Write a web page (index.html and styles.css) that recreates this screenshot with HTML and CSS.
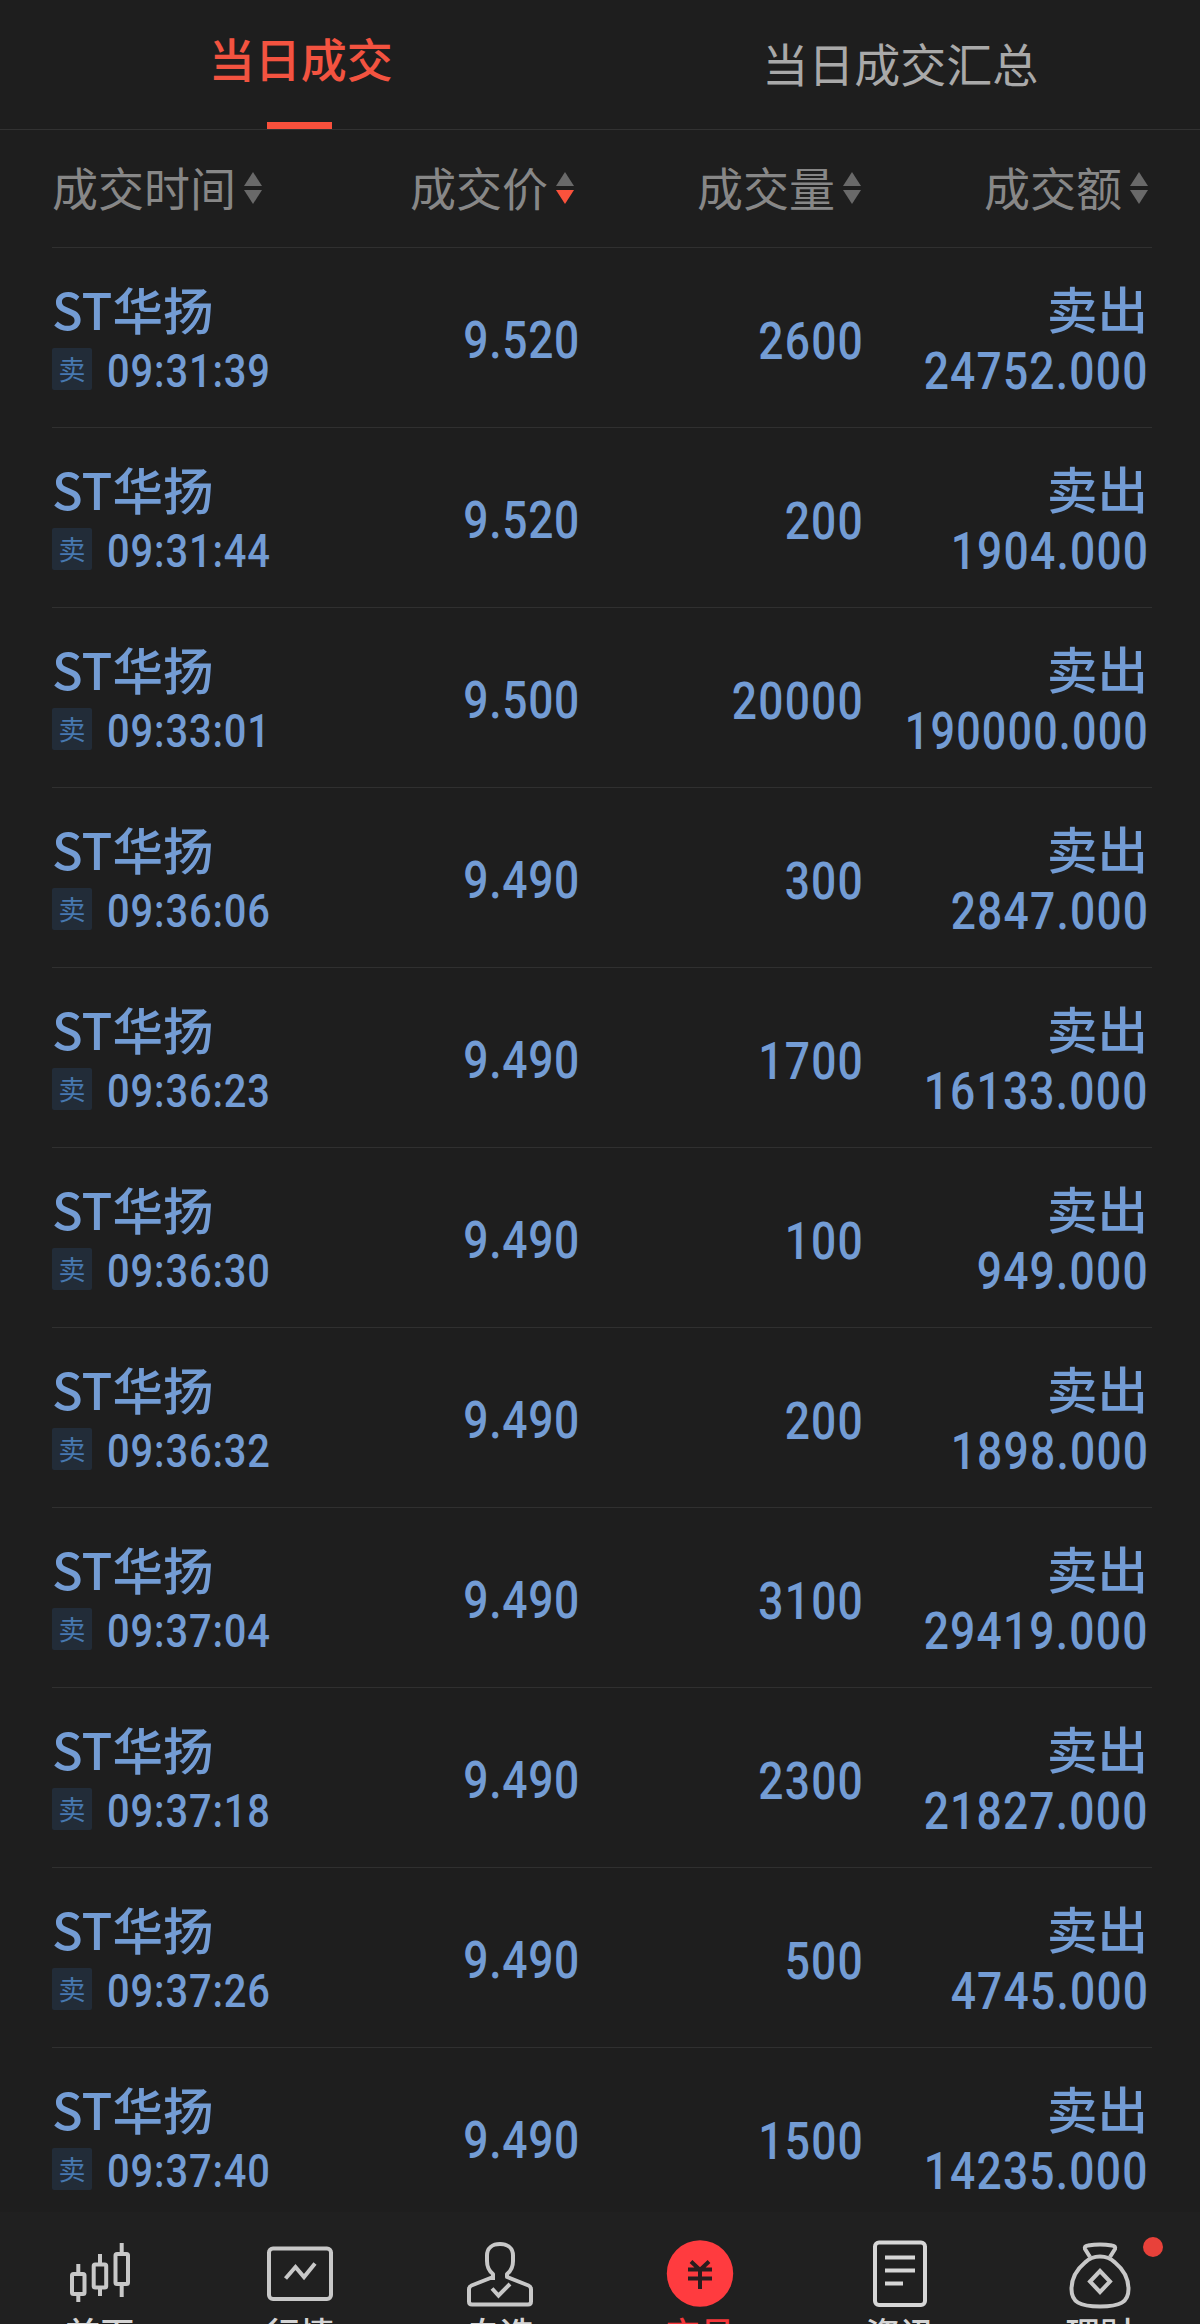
FILE: index.html
```html
<!DOCTYPE html>
<html lang="zh-CN">
<head>
<meta charset="utf-8">
<title>当日成交</title>
<link rel="stylesheet" href="styles.css">
</head>
<body>
<div class="app">
  <div class="tabs">
    <div class="tab tab-active"><span>当日成交</span></div>
    <div class="tab"><span>当日成交汇总</span></div>
  </div>
  <div class="head">
    <div class="th">成交时间<svg class="sort" viewBox="0 0 20 36"><path d="M10 2 19 16H1Z"/><path d="M10 34 19 20H1Z"/></svg></div>
    <div class="th th-price">成交价<svg class="sort sort-desc" viewBox="0 0 20 36"><path d="M10 2 19 16H1Z"/><path d="M10 34 19 20H1Z"/></svg></div>
    <div class="th th-qty">成交量<svg class="sort" viewBox="0 0 20 36"><path d="M10 2 19 16H1Z"/><path d="M10 34 19 20H1Z"/></svg></div>
    <div class="th th-sum">成交额<svg class="sort" viewBox="0 0 20 36"><path d="M10 2 19 16H1Z"/><path d="M10 34 19 20H1Z"/></svg></div>
  </div>
  <div class="list" id="list"></div>
  <div class="nav">
    <div class="item"><svg viewBox="0 0 80 80"><g fill="none" stroke="#c8c8c8" stroke-width="4"><rect x="12" y="44" width="12.500" height="20" rx="1.500"/><rect x="33.700" y="34.500" width="12.500" height="23" rx="1.500"/><rect x="55.500" y="24" width="12.500" height="30" rx="1.500"/><path d="M18.300 34v10M18.300 64v8M40 24v10.500M40 57.500V66M61.700 13v11M61.700 54v13"/></g></svg><span>首页</span></div>
    <div class="item"><svg viewBox="0 0 80 80"><g fill="none" stroke="#c8c8c8" stroke-width="4"><rect x="9" y="18.500" width="62" height="50.500" rx="4"/><path d="M25.500 48.500 35.500 37 44 47 55 33.500"/></g></svg><span>行情</span></div>
    <div class="item"><svg viewBox="0 0 80 80"><g fill="none" stroke="#c8c8c8" stroke-width="4" stroke-linejoin="round"><path d="M33 50v-6C29 41 27 37 27 31v-5.500C27 18 32.500 14 40 14s13 4 13 11.500V31c0 6-2 10-6 13v3l21.500 8.500q2.500 1 2.500 4V71.500q0 3-3 3H12q-3 0-3-3V59.500q0-3 2.500-4L33 47"/><path d="m32 58.500 6.500 7L50 54" stroke-linejoin="miter"/></g></svg><span>自选</span></div>
    <div class="item item-active"><svg viewBox="0 0 80 80"><circle cx="40" cy="43.500" r="33.200" fill="#ff3b3f"/><path d="m31 31.500 9 8.500 9-8.500M28 39.500h24M28 48.500h24M40 39v20" fill="none" stroke="#2a1d1e" stroke-width="4"/></svg><span>交易</span></div>
    <div class="item"><svg viewBox="0 0 80 80"><g fill="none" stroke="#d6d6d6" stroke-width="4"><rect x="15" y="12.500" width="50" height="62.500" rx="4"/><path d="M25 27.500h30M25 40.500h30M25 53.500h18"/></g></svg><span>资讯</span></div>
    <div class="item"><svg viewBox="0 0 80 80"><g fill="none" stroke="#c8c8c8" stroke-width="4" stroke-linejoin="round"><path d="M30 27 25 19q-1-3 3-3.500 12-2.200 24 0 4 .5 3 3.500l-5 8"/><path d="M40 26.500c-6 0-11 2-15 6C16 40 11.500 48 11.500 59c0 13 8 17.500 28.500 17.500S68.500 72 68.500 59C68.500 48 64 40 55 32.500c-4-4-9-6-15-6Z"/><path d="M40 41 50 51.500 40 62 30 51.500Z" stroke-linejoin="miter"/></g></svg><span>理财</span><i class="dot"></i></div>
  </div>
</div>
<script src="app.js"></script>
</body>
</html>
```
FILE: styles.css
```css
* { box-sizing: border-box; }
body {
  margin: 0;
  background: #1e1e1e;
  font-family: "Noto Sans CJK SC", sans-serif;
}
.app {
  display: flex;
  flex-direction: column;
  height: 2324px;
  overflow: hidden;
}
.tabs {
  display: flex;
  flex: none;
  height: 130px;
  border-bottom: 1px solid #323232;
}
.tab {
  flex: 1;
  display: flex;
  align-items: center;
  justify-content: center;
  padding-bottom: 6px;
  font-size: 46px;
  line-height: 46px;
  color: #a9a9a9;
}
.tab-active {
  position: relative;
  padding: 0 0 15px 1px;
  font-weight: 500;
  color: #f35340;
}
.tab-active::after {
  content: "";
  position: absolute;
  left: 267px;
  bottom: 0;
  width: 65px;
  height: 7px;
  background: #f9503c;
}
.head, .row {
  display: grid;
  grid-template-columns: 242px 285px 284px 286px;
  margin: 0 48px 0 52px;
  border-bottom: 1px solid #303030;
}
.head {
  flex: none;
  height: 118px;
  padding-top: 33px;
}
.th {
  display: flex;
  align-items: center;
  justify-content: flex-end;
  gap: 7px;
  height: 46px;
  font-size: 46px;
  line-height: 46px;
  white-space: nowrap;
  color: #878787;
}
.th:first-child { justify-content: flex-start; }
.th-price { padding-right: 4px; }
.th-qty { padding-right: 1px; }
.sort {
  flex: none;
  width: 20px;
  height: 36px;
  margin-top: 4px;
  fill: #696969;
}
.sort-desc path:last-child { fill: #fa523c; }
.list {
  flex: 1;
  min-height: 0;
  overflow: hidden;
}
.row {
  height: 180px;
  padding-top: 35px;
  color: #739cd4;
}
.name, .side {
  height: 50px;
  font-size: 50.5px;
  line-height: 50px;
  font-weight: 500;
}
.stamp {
  display: flex;
  gap: 15px;
  height: 42px;
  margin-top: 15px;
}
.badge {
  width: 42px;
  height: 42px;
  border-radius: 2px;
  background: #222c38;
  font-size: 27px;
  line-height: 41px;
  text-align: center;
  color: #4778b0;
}
.num {
  display: block;
  font-family: Roboto, sans-serif;
  font-weight: 500;
  font-size: 51px;
  line-height: 42px;
  letter-spacing: 1.4px;
  transform: scaleX(.87);
  transform-origin: right center;
  white-space: nowrap;
}
.time {
  padding-top: 3px;
  font-size: 45.5px;
  letter-spacing: 1px;
  transform: scaleX(.875);
  transform-origin: left center;
}
.price, .qty { margin-right: -1px; text-align: right; }
.price { padding-top: 37px; }
.price .num { letter-spacing: .8px; }
.qty { padding-top: 38px; }
.sum {
  display: flex;
  flex-direction: column;
  align-items: flex-end;
}
.side { margin-top: -1px; padding-right: 1px; }
.sum .num { margin-top: 19px; }
.sum .num-long { transform: scaleX(.845); }
.nav {
  display: flex;
  flex: none;
  height: 112px;
  background: #202020;
}
.item {
  position: relative;
  flex: 1;
  display: flex;
  flex-direction: column;
  align-items: center;
  padding-top: 18px;
  font-size: 34.500px;
  line-height: 40px;
  font-weight: 500;
  color: #d4d4d4;
}
.item svg {
  flex: none;
  width: 80px;
  height: 80px;
}
.item span { margin-top: 2px; }
.item-active { color: #f5373b; }
.dot {
  position: absolute;
  left: 143px;
  top: 25px;
  width: 20px;
  height: 20px;
  border-radius: 50%;
  background: #e8413a;
}
```
FILE: app.js
```js
const trades = [
  ["09:31:39", "9.520", "2600", "24752.000"],
  ["09:31:44", "9.520", "200", "1904.000"],
  ["09:33:01", "9.500", "20000", "190000.000"],
  ["09:36:06", "9.490", "300", "2847.000"],
  ["09:36:23", "9.490", "1700", "16133.000"],
  ["09:36:30", "9.490", "100", "949.000"],
  ["09:36:32", "9.490", "200", "1898.000"],
  ["09:37:04", "9.490", "3100", "29419.000"],
  ["09:37:18", "9.490", "2300", "21827.000"],
  ["09:37:26", "9.490", "500", "4745.000"],
  ["09:37:40", "9.490", "1500", "14235.000"]
];

document.getElementById("list").innerHTML = trades.map(([time, price, qty, sum]) => `
  <div class="row">
    <div>
      <div class="name">ST华扬</div>
      <div class="stamp"><span class="badge">卖</span><span class="num time">${time}</span></div>
    </div>
    <div class="price"><span class="num">${price}</span></div>
    <div class="qty"><span class="num">${qty}</span></div>
    <div class="sum"><div class="side">卖出</div><span class="num${sum.length > 9 ? " num-long" : ""}">${sum}</span></div>
  </div>`).join("");
```
